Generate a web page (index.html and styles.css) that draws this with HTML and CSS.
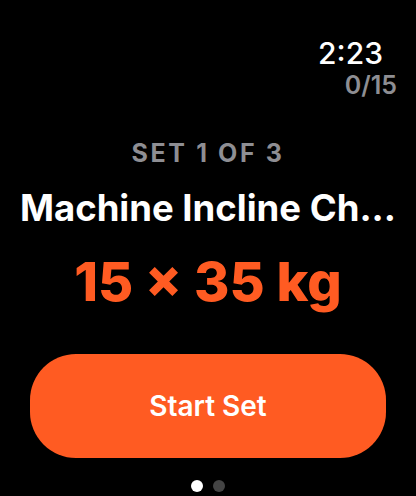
FILE: index.html
```html
<!DOCTYPE html>
<html>
<head>
<meta charset="utf-8">
<link rel="stylesheet" href="styles.css">
</head>
<body>
<div class="screen">
  <header class="status">
    <div class="time">2:23</div>
    <div class="count">0/15</div>
  </header>
  <main class="content">
    <div class="set-label">SET 1 OF 3</div>
    <div class="exercise">Machine Incline Ch...</div>
    <div class="reps">15 × 35 kg</div>
  </main>
  <button class="start">Start Set</button>
  <div class="dots">
    <span class="dot active"></span>
    <span class="dot"></span>
  </div>
</div>
</body>
</html>
```
FILE: styles.css
```css
html, body {
  margin: 0;
  padding: 0;
  background: #000;
}
.screen {
  width: 416px;
  height: 496px;
  display: flex;
  flex-direction: column;
  font-family: Inter, "Liberation Sans", sans-serif;
  color: #fff;
  overflow: hidden;
}
.status {
  display: flex;
  flex-direction: column;
  align-items: flex-end;
  padding-top: 38px;
}
.time {
  font-size: 30px;
  line-height: 30px;
  font-weight: 500;
  padding-right: 33px;
}
.count {
  font-size: 25px;
  line-height: 28px;
  font-weight: 600;
  color: #8e8e93;
  padding-right: 19px;
  margin-top: 3px;
}
.content {
  display: flex;
  flex-direction: column;
  align-items: center;
  margin-top: 39px;
}
.set-label {
  font-size: 25px;
  line-height: 30px;
  font-weight: 700;
  color: #8e8e93;
  letter-spacing: 2.6px;
}
.exercise {
  font-size: 36.5px;
  line-height: 40px;
  font-weight: 700;
  margin-top: 20px;
  white-space: nowrap;
}
.reps {
  font-size: 54px;
  line-height: 60px;
  font-weight: 800;
  color: #ff5b22;
  margin-top: 24px;
}
.start {
  align-self: center;
  width: 356px;
  height: 104px;
  margin-top: 42px;
  border: none;
  border-radius: 46px;
  background: #ff5b22;
  color: #fff;
  font-family: Inter, "Liberation Sans", sans-serif;
  font-size: 28px;
  font-weight: 600;
  padding: 0;
}
.dots {
  display: flex;
  justify-content: center;
  gap: 10px;
  margin-top: 22px;
}
.dot {
  width: 12px;
  height: 12px;
  border-radius: 50%;
  background: #444;
}
.dot.active {
  background: #fff;
}
```
